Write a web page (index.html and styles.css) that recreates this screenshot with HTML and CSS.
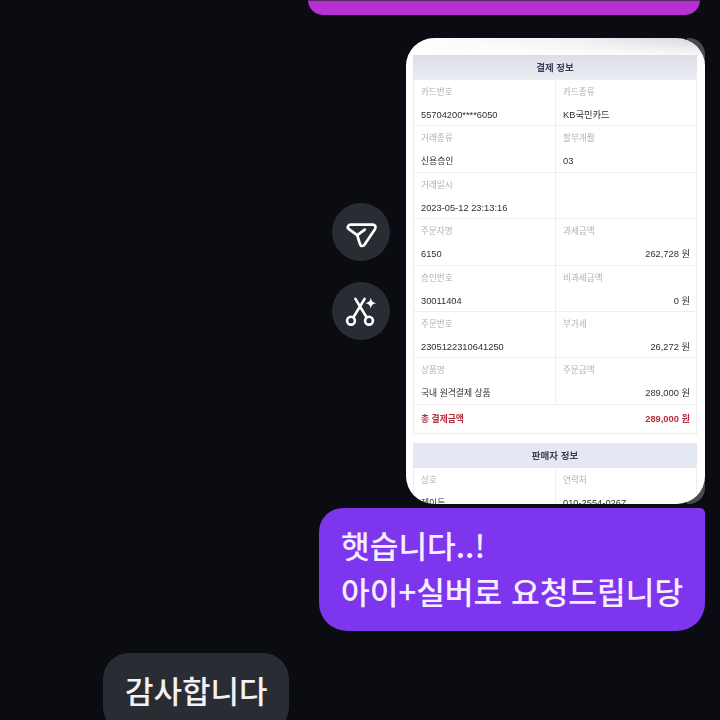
FILE: index.html
```html
<!DOCTYPE html>
<html lang="ko">
<head>
    <meta charset="UTF-8">
    <meta name="viewport" content="width=device-width, initial-scale=1.0">
    <title>채팅</title>
    <link rel="stylesheet" href="styles.css">
</head>
<body>
    <div class="chat">
        <div class="bubble-top"></div>

        <div class="shot-row">
            <div class="actions">
                <button class="action" aria-label="공유">
                    <svg width="58" height="58" viewBox="0 0 58 58" fill="none" stroke="#fff" stroke-width="2.7" stroke-linecap="round" stroke-linejoin="round">
                        <path d="M18.6 21.6H40.6c2.5 0 3.7 2.3 2.5 4.3L32.6 41.6c-1.3 2.1-3.9 1.8-4.6-.5L25.2 32.2 16.9 26.2c-2.1-1.5-1-4.6 1.7-4.6z"/>
                        <path d="M25.4 32.2l7.4-5.6"/>
                    </svg>
                </button>
                <button class="action" aria-label="AI 편집">
                    <svg width="58" height="58" viewBox="0 0 58 58" fill="none" stroke="#fff" stroke-width="2.6" stroke-linecap="round">
                        <circle cx="19" cy="38.7" r="3.9"/>
                        <circle cx="37" cy="38.7" r="3.9"/>
                        <path d="M21.3 35.5L32.6 16.8"/>
                        <path d="M34.7 35.5L23.4 16.8"/>
                        <path d="M38.8 15.6c.6 3.6 1.9 5 5.4 5.6-3.5.6-4.8 2-5.4 5.6-.6-3.6-2-5-5.5-5.6 3.5-.6 4.9-2 5.5-5.6z" fill="#fff" stroke="none"/>
                    </svg>
                </button>
            </div>

            <div class="shot">
                <div class="receipt">
                    <div class="receipt-title first">결제 정보</div>
                    <div class="receipt-table">
                        <div class="cell"><span class="label">카드번호</span><span class="value">55704200****6050</span></div>
                        <div class="cell"><span class="label">카드종류</span><span class="value">KB국민카드</span></div>
                        <div class="cell"><span class="label">거래종류</span><span class="value ko">신용승인</span></div>
                        <div class="cell"><span class="label">할부개월</span><span class="value">03</span></div>
                        <div class="cell"><span class="label">거래일시</span><span class="value">2023-05-12 23:13:16</span></div>
                        <div class="cell"></div>
                        <div class="cell"><span class="label">주문자명</span><span class="value">6150</span></div>
                        <div class="cell"><span class="label">과세금액</span><span class="value right">262,728 원</span></div>
                        <div class="cell"><span class="label">승인번호</span><span class="value">30011404</span></div>
                        <div class="cell"><span class="label">비과세금액</span><span class="value right">0 원</span></div>
                        <div class="cell"><span class="label">주문번호</span><span class="value">2305122310641250</span></div>
                        <div class="cell"><span class="label">부가세</span><span class="value right">26,272 원</span></div>
                        <div class="cell"><span class="label">상품명</span><span class="value ko">국내 원격결제 상품</span></div>
                        <div class="cell"><span class="label">주문금액</span><span class="value right">289,000 원</span></div>
                        <div class="total"><span class="ko">총 결제금액</span><span>289,000 원</span></div>
                    </div>
                    <div class="receipt-title">판매자 정보</div>
                    <div class="receipt-table open">
                        <div class="cell"><span class="label">상호</span><span class="value ko">제이듬</span></div>
                        <div class="cell"><span class="label">연락처</span><span class="value">010-2554-0267</span></div>
                    </div>
                </div>
            </div>
        </div>

        <div class="bubble-mine">햇습니다..!<br>아이+실버로 요청드립니당</div>
        <div class="bubble-other">감사합니다</div>
    </div>
</body>
</html>
```

FILE: styles.css
```css
* { box-sizing: border-box; }
html, body { margin: 0; padding: 0; }
body { background-color: #0a0c12; font-family: "Noto Sans CJK KR", "Noto Sans", sans-serif; }

.chat { width: 720px; height: 720px; overflow: hidden; display: flex; flex-direction: column; background-color: #0a0c12; }

.bubble-top {
    flex: none;
    width: 392px;
    height: 15px;
    margin-left: 308px;
    background-color: #b92fd6;
    border-top: 1px solid #57285f;
    border-radius: 0 0 24px 24px;
}

.shot-row { flex: none; display: flex; justify-content: flex-end; gap: 16px; margin-top: 23px; padding-right: 15px; }

.actions { display: flex; flex-direction: column; gap: 21px; margin-top: 165px; }
.action { width: 58px; height: 58px; padding: 0; border: none; border-radius: 50%; background-color: #2a2c33; display: block; }
.action svg { display: block; }

.shot {
    width: 299px;
    height: 466px;
    background: linear-gradient(90deg, transparent 94%, #4a4a4e 94%);
    border-radius: 0 16px 16px 0;
}

.receipt {
    width: 100%;
    height: 100%;
    overflow: hidden;
    padding: 17px 8px 0 7px;
    border-radius: 28px;
    background:
        linear-gradient(180deg, rgba(255,255,255,0) 0, #fff 20px),
        linear-gradient(90deg, #fff 0, #f1f1f2 55%, #d6d6d9 100%);
    font-family: "Liberation Sans", "Noto Sans CJK KR", sans-serif;
    filter: blur(0.35px);
}

.receipt-title {
    height: 25px;
    line-height: 25px;
    text-align: center;
    font-size: 9.5px;
    font-weight: 700;
    color: #3a3f55;
    background-color: #e4e8f3;
}
.receipt-title.first { background: linear-gradient(180deg, #dcdde6, #eceef4); }

.receipt-table {
    display: grid;
    grid-template-columns: 142px 142px;
    grid-template-rows: repeat(7, 46.4px) 28px;
    margin-bottom: 9px;
    border: 1px solid #ececee;
    border-top: none;
}
.receipt-table.open { border-bottom: none; margin-bottom: 0; }

.cell { display: flex; flex-direction: column; padding: 5px 8px 0 7px; border-bottom: 1px solid #efeff1; }
.cell:nth-child(odd) { border-right: 1px solid #efeff1; }

.label { font-size: 8.6px; line-height: 14px; color: #b0b0b4; }
.value { margin-top: 9px; font-size: 9.3px; line-height: 14px; color: #2f2f33; }
.value.right { text-align: right; }
.ko { font-size: 8.8px; }

.total {
    grid-column: 1 / 3;
    display: flex;
    justify-content: space-between;
    align-items: baseline;
    padding: 7px 8px 0 7px;
    font-size: 9.3px;
    line-height: 14px;
    font-weight: 700;
    color: #b5303f;
}

.bubble-mine {
    flex: none;
    width: 386px;
    height: 123px;
    margin: 4px 0 0 319px;
    padding: 14px 0 0 22px;
    font-size: 31.2px;
    font-weight: 500;
    line-height: 46px;
    color: #f6eefe;
    white-space: nowrap;
    background-color: #7d35ee;
    border-radius: 24px 5px 28px 28px;
}

.bubble-other {
    flex: none;
    width: 186px;
    height: 80px;
    margin: 22px 0 0 103px;
    padding: 14px 0 0 22px;
    font-size: 31px;
    font-weight: 500;
    line-height: 46px;
    color: #f2f2f3;
    white-space: nowrap;
    background-color: #2a2c33;
    border-radius: 26px;
}
```
